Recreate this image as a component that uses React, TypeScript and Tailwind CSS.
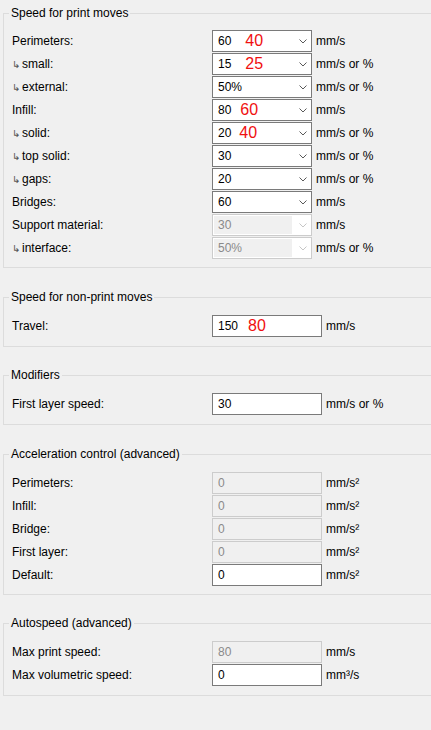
import React from "react";

const FONT = { fontFamily: '"Liberation Sans", Arial, sans-serif' };

function Chevron({ disabled }: { disabled?: boolean }) {
  return (
    <svg width="8" height="5" viewBox="0 0 8 5" className="block">
      <path
        d="M0.5 0.5 L4 4 L7.5 0.5"
        fill="none"
        stroke={disabled ? "#c6c6c6" : "#5a5a5a"}
        strokeWidth="1"
      />
    </svg>
  );
}

type Row = {
  label: string;
  sub?: boolean;
  value: string;
  mark?: string;
  markGap?: string;
  unit: React.ReactNode;
  kind: "combo" | "text";
  disabled?: boolean;
};

function Label({ label, sub }: { label: string; sub?: boolean }) {
  return (
    <div className="w-[200px] text-[12px] leading-[22px] text-black whitespace-nowrap">
      {sub && (
        <span
          className="inline-block w-[10px] text-[10px] text-[#555]"
          style={{ fontFamily: '"DejaVu Sans", sans-serif' }}
        >
          ↳
        </span>
      )}
      <span>{label}</span>
    </div>
  );
}

function Mark({ text, gap }: { text?: string; gap?: string }) {
  if (!text) return null;
  return (
    <span className={`text-[16px] leading-[16px] text-[#f01010] ${gap ?? "ml-[12px]"}`}>
      {text}
    </span>
  );
}

function Field({ row }: { row: Row }) {
  if (row.kind === "combo") {
    if (row.disabled) {
      return (
        <div className="w-[100px] h-[22px] border border-[#cccccc] bg-white flex items-center p-[1px]">
          <div className="w-[78px] h-[18px] bg-[#f0f0f0] flex items-center pl-[4px] text-[12px] text-[#8a8a8a]">
            {row.value}
          </div>
          <div className="flex-1 flex items-center justify-end pr-[3px]">
            <Chevron disabled />
          </div>
        </div>
      );
    }
    return (
      <div className="w-[100px] h-[22px] border border-[#7a7a7a] bg-white flex items-center pl-[5px] pr-[4px]">
        <span className="text-[12px] text-black">{row.value}</span>
        <Mark text={row.mark} gap={row.markGap} />
        <div className="flex-1" />
        <Chevron />
      </div>
    );
  }
  return (
    <div
      className={`w-[110px] h-[22px] border flex items-center pl-[5px] ${
        row.disabled
          ? "border-[#cccccc] bg-[#f0f0f0] text-[#8a8a8a]"
          : "border-[#7a7a7a] bg-white text-black"
      }`}
    >
      <span className="text-[12px]">{row.value}</span>
      <Mark text={row.mark} gap={row.markGap} />
    </div>
  );
}

function Group({
  title,
  rows,
  mt,
  pt,
  pb,
}: {
  title: string;
  rows: Row[];
  mt: string;
  pt: string;
  pb: string;
}) {
  return (
    <fieldset className={`border border-r-0 border-[#dcdcdc] m-0 p-0 min-w-0 ${mt}`}>
      <legend className="ml-[5px] px-[2px] h-[16px] leading-[16px] text-[12px] text-black">
        {title}
      </legend>
      <div className={`flex flex-col gap-[1px] pl-[8px] ${pt} ${pb}`}>
        {rows.map((r, i) => (
          <div key={i} className="flex items-center h-[22px]">
            <Label label={r.label} sub={r.sub} />
            <Field row={r} />
            <div className="ml-[4px] text-[12px] text-black whitespace-nowrap">{r.unit}</div>
          </div>
        ))}
      </div>
    </fieldset>
  );
}

const S2 = "mm/s²";

export default function App() {
  const g1: Row[] = [
    { label: "Perimeters:", value: "60", mark: "40", markGap: "ml-[14px]", unit: "mm/s", kind: "combo" },
    { label: "small:", sub: true, value: "15", mark: "25", markGap: "ml-[14px]", unit: "mm/s or %", kind: "combo" },
    { label: "external:", sub: true, value: "50%", unit: "mm/s or %", kind: "combo" },
    { label: "Infill:", value: "80", mark: "60", markGap: "ml-[9px]", unit: "mm/s", kind: "combo" },
    { label: "solid:", sub: true, value: "20", mark: "40", markGap: "ml-[8px]", unit: "mm/s or %", kind: "combo" },
    { label: "top solid:", sub: true, value: "30", unit: "mm/s or %", kind: "combo" },
    { label: "gaps:", sub: true, value: "20", unit: "mm/s or %", kind: "combo" },
    { label: "Bridges:", value: "60", unit: "mm/s", kind: "combo" },
    { label: "Support material:", value: "30", unit: "mm/s", kind: "combo", disabled: true },
    { label: "interface:", sub: true, value: "50%", unit: "mm/s or %", kind: "combo", disabled: true },
  ];
  const g2: Row[] = [
    { label: "Travel:", value: "150", mark: "80", markGap: "ml-[10px]", unit: "mm/s", kind: "text" },
  ];
  const g3: Row[] = [
    { label: "First layer speed:", value: "30", unit: "mm/s or %", kind: "text" },
  ];
  const g4: Row[] = [
    { label: "Perimeters:", value: "0", unit: S2, kind: "text", disabled: true },
    { label: "Infill:", value: "0", unit: S2, kind: "text", disabled: true },
    { label: "Bridge:", value: "0", unit: S2, kind: "text", disabled: true },
    { label: "First layer:", value: "0", unit: S2, kind: "text", disabled: true },
    { label: "Default:", value: "0", unit: S2, kind: "text" },
  ];
  const g5: Row[] = [
    { label: "Max print speed:", value: "80", unit: "mm/s", kind: "text", disabled: true },
    { label: "Max volumetric speed:", value: "0", unit: "mm³/s", kind: "text" },
  ];
  return (
    <div
      className="w-[431px] h-[730px] overflow-hidden bg-[#f0f0f0] pl-[3px] pt-[5px]"
      style={FONT}
    >
      <Group title="Speed for print moves" rows={g1} mt="mt-0" pt="pt-[9px]" pb="pb-[8px]" />
      <Group title="Speed for non-print moves" rows={g2} mt="mt-[21px]" pt="pt-[10px]" pb="pb-[9px]" />
      <Group title="Modifiers" rows={g3} mt="mt-[20px]" pt="pt-[10px]" pb="pb-[9px]" />
      <Group title="Acceleration control (advanced)" rows={g4} mt="mt-[21px]" pt="pt-[10px]" pb="pb-[8px]" />
      <Group title="Autospeed (advanced)" rows={g5} mt="mt-[20px]" pt="pt-[10px]" pb="pb-[9px]" />
    </div>
  );
}
